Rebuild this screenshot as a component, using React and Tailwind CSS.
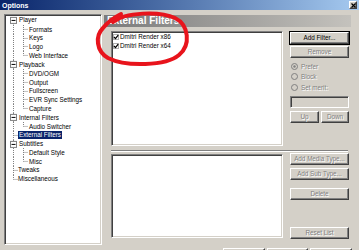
import React from 'react';

// Options dialog, "External Filters" page
const TREE = [
  { label: 'Player', children: ['Formats', 'Keys', 'Logo', 'Web Interface'] },
  { label: 'Playback', children: ['DVD/OGM', 'Output', 'Fullscreen', 'EVR Sync Settings', 'Capture'] },
  { label: 'Internal Filters', children: ['Audio Switcher'] },
  { label: 'External Filters', selected: true },
  { label: 'Subtitles', children: ['Default Style', 'Misc'] },
  { label: 'Tweaks' },
  { label: 'Miscellaneous' },
];

const ROW = 8.83;
const MID = ROW / 2;
const DOT = { stroke: '#808080', strokeWidth: 1, strokeDasharray: '1 1' };

const raised =
  'border border-t-white border-l-white border-r-[#404040] border-b-[#404040] shadow-[inset_-1px_-1px_0_#808080]';
const sunken =
  'border border-t-[#808080] border-l-[#808080] border-r-white border-b-white shadow-[inset_1px_1px_0_#404040,inset_-1px_-1px_0_#d4d0c8]';
const disabledText = 'text-[#808080] [text-shadow:1px_1px_0_#ffffff]';

const RootRow = ({ item, first, last }) => {
  const hasKids = !!item.children;
  return (
    <div className="flex items-center" style={{ height: ROW }}>
      <svg width={hasKids ? 13 : 12} height={ROW} className="shrink-0">
        <line x1="7.5" y1={first ? MID : 0} x2="7.5" y2={last ? MID : ROW} {...DOT} />
        {hasKids ? (
          <>
            <rect x="4.5" y={MID - 3} width="6" height="6" fill="#ffffff" stroke="#808080" />
            <line x1="5.5" y1={MID} x2="9.5" y2={MID} stroke="#000000" strokeWidth="1" />
          </>
        ) : (
          <line x1="7.5" y1={MID} x2="12" y2={MID} {...DOT} />
        )}
      </svg>
      <span
        className={`leading-[8px] whitespace-nowrap ${
          item.selected ? 'bg-[#0a246a] text-white px-px' : 'text-black'
        }`}
      >
        {item.label}
      </span>
    </div>
  );
};

const ChildRow = ({ label, lastChild }) => (
  <div className="flex items-center" style={{ height: ROW }}>
    <svg width="23" height={ROW} className="shrink-0">
      <line x1="7.5" y1="0" x2="7.5" y2={ROW} {...DOT} />
      <line x1="17.5" y1="0" x2="17.5" y2={lastChild ? MID : ROW} {...DOT} />
      <line x1="17.5" y1={MID} x2="22" y2={MID} {...DOT} />
    </svg>
    <span className="whitespace-nowrap text-black">{label}</span>
  </div>
);

const Btn = ({ children, className = '', enabled = false }) => (
  <div
    className={`flex h-[12px] items-center justify-center bg-[#d4d0c8] text-[6.3px] ${raised} ${
      enabled ? 'text-black outline outline-1 outline-black' : disabledText
    } ${className}`}
  >
    {children}
  </div>
);

const Radio = ({ label, checked }) => (
  <div className="flex h-[10.5px] items-center gap-[3px]">
    <svg width="7" height="7" className="shrink-0">
      <circle cx="3.5" cy="3.5" r="3" fill="#d4d0c8" stroke="#808080" />
      {checked && <circle cx="3.5" cy="3.5" r="1.2" fill="#808080" />}
    </svg>
    <span className={`text-[6.3px] ${disabledText}`}>{label}</span>
  </div>
);

const Check = () => (
  <svg width="6" height="6" className="shrink-0">
    <rect x="0.5" y="0.5" width="5" height="5" fill="#ffffff" stroke="#b0b0b0" />
    <path d="M1 3 L2.5 4.6 L5.2 1.2" fill="none" stroke="#000000" strokeWidth="1.3" />
  </svg>
);

export default function App() {
  return (
    <div className="relative flex h-[250px] w-[359px] flex-col overflow-hidden bg-[#d4d0c8] font-['Liberation_Sans',Arial,sans-serif]">
      {/* Title bar */}
      <div className="flex h-[10px] shrink-0 items-center justify-between bg-linear-to-r from-[#0a246a] to-[#a6caf0] pl-[2px] pr-[2px]">
        <span className="text-[7px] font-bold leading-none text-white">Options</span>
        <div className={`flex h-[8px] w-[8px] items-center justify-center bg-[#d4d0c8] ${raised}`}>
          <svg width="5" height="5">
            <path d="M0.5 0.5 L4.5 4.5 M4.5 0.5 L0.5 4.5" stroke="#000" strokeWidth="1.2" />
          </svg>
        </div>
      </div>

      <div className="flex h-[235px] shrink-0 pl-[4px] pt-[4px]">
        {/* Tree */}
        <div className={`h-[231px] w-[98px] shrink-0 bg-white pl-[1px] pt-px text-[6.3px] ${sunken}`}>
          {TREE.map((item, i) => (
            <React.Fragment key={item.label}>
              <RootRow item={item} first={i === 0} last={i === TREE.length - 1} />
              {item.children &&
                item.children.map((c, j) => (
                  <ChildRow key={c} label={c} lastChild={j === item.children.length - 1} />
                ))}
            </React.Fragment>
          ))}
        </div>

        {/* Page */}
        <div className="ml-[2px] flex w-[247px] flex-col">
          <div className="mt-px flex h-[12px] items-center bg-linear-to-r from-[#7b7b7b] to-[#c4c2bd] pl-[3px]">
            <span className="text-[10px] font-bold leading-none text-white">External Filters</span>
          </div>

          <div className="flex flex-col pl-[7px] pt-[4px]">
            <div className="flex">
              <div className={`h-[115px] w-[172px] bg-white ${sunken} text-[6.3px] text-black`}>
                {['Dmitri Render x86', 'Dmitri Render x64'].map((f) => (
                  <div key={f} className="flex h-[9px] items-center gap-px pl-px">
                    <Check />
                    <span>{f}</span>
                  </div>
                ))}
              </div>
              <div className="ml-[7px] flex w-[59px] flex-col pt-px">
                <Btn enabled>Add Filter...</Btn>
                <Btn className="mt-[2px]">Remove</Btn>
                <div className="mt-[3px] flex flex-col pl-px">
                  <Radio label="Prefer" checked />
                  <Radio label="Block" />
                  <Radio label="Set merit:" />
                </div>
                <div className={`mt-[3px] h-[12px] bg-[#d4d0c8] ${sunken}`} />
                <div className="mt-[3px] flex gap-[2px]">
                  <Btn className="w-[29px]">Up</Btn>
                  <Btn className="w-[28px]">Down</Btn>
                </div>
              </div>
            </div>

            <div className="mt-[4px] h-[2px] w-[237px] border-t border-b border-t-[#808080] border-b-white" />

            <div className="mt-[2px] flex">
              <div className={`h-[84px] w-[172px] bg-white ${sunken}`} />
              <div className="-mt-px ml-[7px] flex w-[59px] flex-col">
                <Btn>Add Media Type...</Btn>
                <Btn className="mt-[3px]">Add Sub Type...</Btn>
                <Btn className="mt-[8px]">Delete</Btn>
                <Btn className="mt-[27px]">Reset List</Btn>
              </div>
            </div>
          </div>
        </div>
      </div>

      {/* Dialog buttons, only their top edges show */}
      <div className="mt-[3px] flex gap-[2px] pl-[223px]">
        <Btn className="w-[42px]" />
        <Btn className="w-[41px]" />
        <Btn className="w-[42px]" />
      </div>

      {/* Red marker circle drawn over the screenshot */}
      <svg className="pointer-events-none absolute left-0 top-0" width="359" height="250">
        <path
          d="M113 22 C125 12, 160 11, 175 18 C189 25, 191 45, 179 55 C166 66, 126 67, 108 58 C96 51, 95 36, 103 28 C107 23, 113 18, 121 14"
          fill="none"
          stroke="#e8141c"
          strokeWidth="4"
          strokeLinecap="round"
        />
      </svg>
    </div>
  );
}
